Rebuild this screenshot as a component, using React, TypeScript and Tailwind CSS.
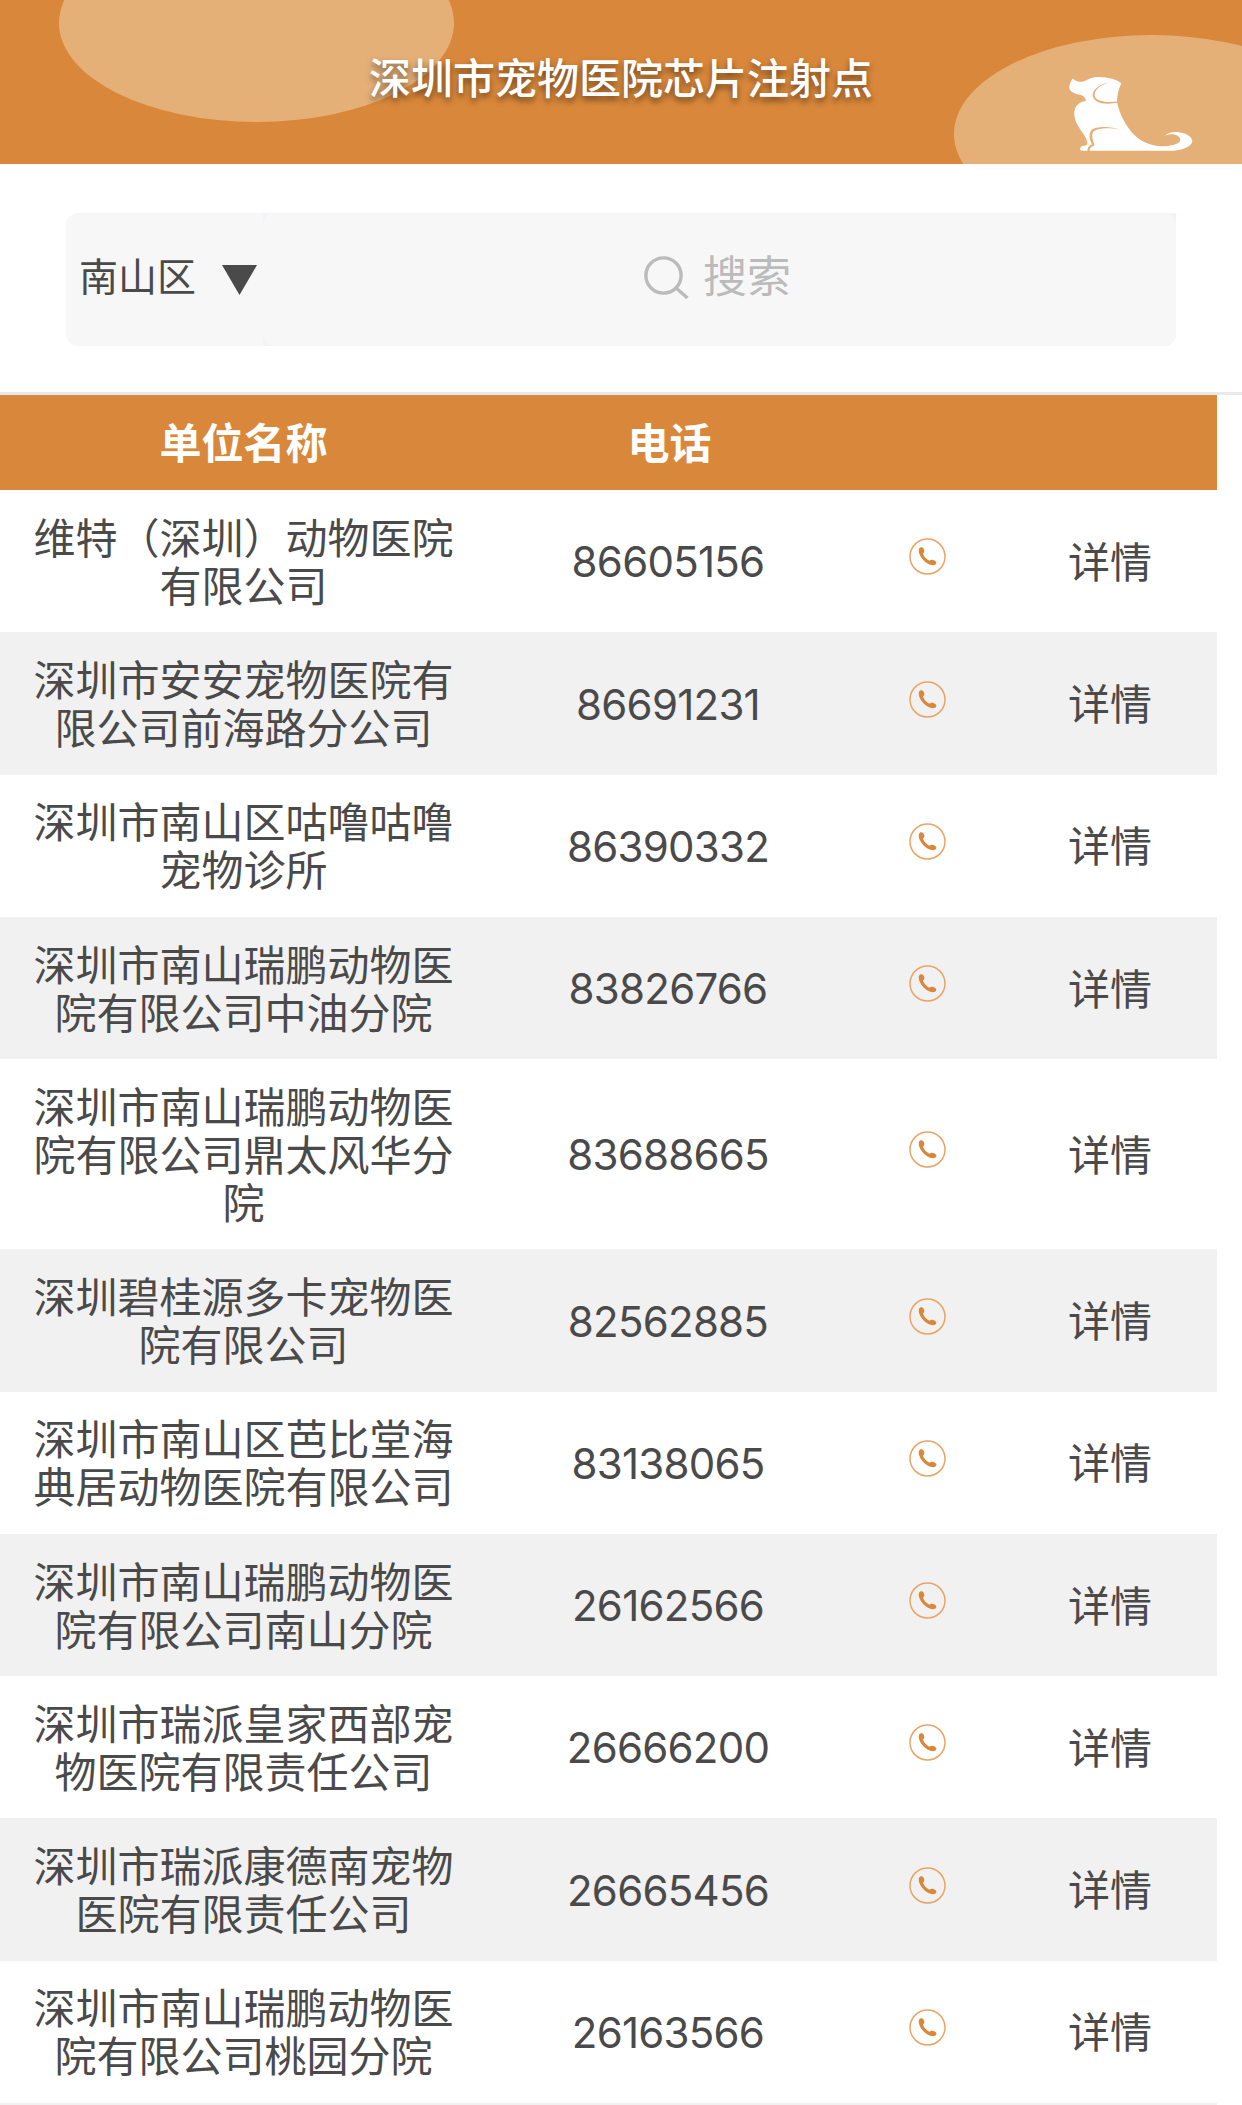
const hospitals = [
  { name: "维特（深圳）动物医院有限公司", phone: "86605156" },
  { name: "深圳市安安宠物医院有限公司前海路分公司", phone: "86691231" },
  { name: "深圳市南山区咕噜咕噜宠物诊所", phone: "86390332" },
  { name: "深圳市南山瑞鹏动物医院有限公司中油分院", phone: "83826766" },
  { name: "深圳市南山瑞鹏动物医院有限公司鼎太风华分院", phone: "83688665" },
  { name: "深圳碧桂源多卡宠物医院有限公司", phone: "82562885" },
  { name: "深圳市南山区芭比堂海典居动物医院有限公司", phone: "83138065" },
  { name: "深圳市南山瑞鹏动物医院有限公司南山分院", phone: "26162566" },
  { name: "深圳市瑞派皇家西部宠物医院有限责任公司", phone: "26666200" },
  { name: "深圳市瑞派康德南宠物医院有限责任公司", phone: "26665456" },
  { name: "深圳市南山瑞鹏动物医院有限公司桃园分院", phone: "26163566" },
];

const DogIcon = () => (
  <svg viewBox="85 48 375 227" className="w-[125px] h-[76px]">
    <path
      fill="#fff"
      d="M98 56C108 60 112 66 122 65C140 65 146 53 165 51C200 48 235 58 245 70C240 80 234 95 232 122C234 145 250 185 275 215C300 245 335 260 375 258C400 257 422 250 422 238C420 222 392 217 374 228C385 216 405 214 420 217C445 220 458 233 458 243C455 262 420 272 390 272L125 272C118 268 122 258 132 257C140 256 145 253 143 246C138 220 108 200 104 165C102 140 115 127 139 122C138 110 128 104 112 102C97 98 88 90 89 80C90 70 94 64 98 56Z"
    />
    <path
      fill="#e5b077"
      d="M212 66C180 70 159 88 159 105C160 122 180 131 205 130.5L234 128L233 124C205 127 171 125 165 108C162 90 180 74 212 66Z"
    />
    <path
      fill="#e5b077"
      d="M238 208C215 199 170 197 154 211C146 225 151 240 157 253C146 257 142 265 144 274L150 274C149 264 157 258 164 257C164 248 153 230 160 215C175 202 210 202 238 208Z"
    />
  </svg>
);

const PhoneIcon = () => (
  <svg viewBox="0 0 37 37" className="w-[37px] h-[37px]">
    <circle cx="18.5" cy="18.5" r="17.5" fill="none" stroke="#e9a566" strokeWidth="1.5" />
    <path
      fill="#d9883b"
      d="M11.2 9.6C12.4 8.9 14 9.5 14.9 11.2C15.8 13 15.4 14.4 14 15.6C14.5 18.4 17.2 21.4 20.4 22.7C21.8 21.6 23.3 21.5 25 22.2C27 23 27.8 24.2 27.2 25.6C26.4 27.3 23.6 27.7 20.6 26.5C15.2 24.4 10.4 18.6 9.8 13.6C9.6 11.6 10.1 10.2 11.2 9.6Z"
    />
  </svg>
);

const Header = () => (
  <header className="relative h-[164px] overflow-hidden bg-[#d9883b] flex items-center justify-center">
    <div className="absolute left-[59px] top-[-76px] w-[395px] h-[198px] rounded-[50%] bg-[#e5b077]" />
    <div className="absolute left-[954px] top-[35px] w-[395px] h-[198px] rounded-[50%] bg-[#e5b077]" />
    <div className="absolute left-[1068px] top-[76px]">
      <DogIcon />
    </div>
    <h1 className="relative pb-[12px] text-[42px] leading-[48px] font-medium text-white [text-shadow:0_4px_6px_rgba(0,0,0,0.5)]">
      深圳市宠物医院芯片注射点
    </h1>
  </header>
);

const SearchBar = () => (
  <div className="flex h-[228px] px-[66px] pt-[49px]">
    <div className="flex items-center w-[197px] h-[133px] pl-[13px] pb-[11px] rounded-l-xl bg-[#f7f7f7] text-[#4a4a4a]">
      <span className="text-[39px] leading-[48px]">南山区</span>
      <svg viewBox="0 0 35 30" className="w-[35px] h-[30px] ml-[26px] mt-3">
        <path d="M0 0H35L17.5 30Z" fill="#4a4a4a" />
      </svg>
    </div>
    <div className="flex-1 h-[133px] rounded-br-xl bg-[#f2f2f8]">
      <div className="flex items-center h-full pl-[381px] pb-[12px] rounded-xl bg-[#f7f7f7] text-[#bbb]">
        <svg viewBox="0 0 45 43" className="w-[45px] h-[43px] mt-2" fill="none" stroke="#bbb" strokeWidth="3.4">
          <circle cx="19.5" cy="19.5" r="17.6" />
          <path d="M32 32L43.5 42" />
        </svg>
        <span className="ml-[14px] text-[44px] leading-[48px]">搜索</span>
      </div>
    </div>
  </div>
);

const App = () => {
  return (
    <div className="w-[1242px] h-[2105px] overflow-hidden bg-white text-[#4a4a4a] font-['Noto_Sans_CJK_SC',sans-serif]">
      <Header />
      <SearchBar />
      <div className="h-[3px] bg-[#e9e9e9]" />

      <div className="w-[1217px] text-[42px] leading-[48px] text-center">
        <div className="grid grid-cols-[487px_365px_151px_214px] items-center h-[95px] pb-[3px] bg-[#d9883b] text-white font-bold">
          <span>单位名称</span>
          <span>电话</span>
        </div>

        {hospitals.map((item) => (
          <div
            key={item.name}
            className="grid grid-cols-[487px_365px_151px_214px] items-center pt-[21.8px] pb-[24.46px] even:bg-white odd:bg-[#f1f1f1]"
          >
            <span className="px-[33px]">{item.name}</span>
            <span className="pt-[5px] pr-[3px] font-['Inter',sans-serif] tracking-[-0.75px]">{item.phone}</span>
            <span className="flex justify-center pb-[6px]">
              <PhoneIcon />
            </span>
            <span>详情</span>
          </div>
        ))}
        <div className="h-[2px] bg-[#f1f1f1]" />
      </div>
    </div>
  );
};

export default App;
